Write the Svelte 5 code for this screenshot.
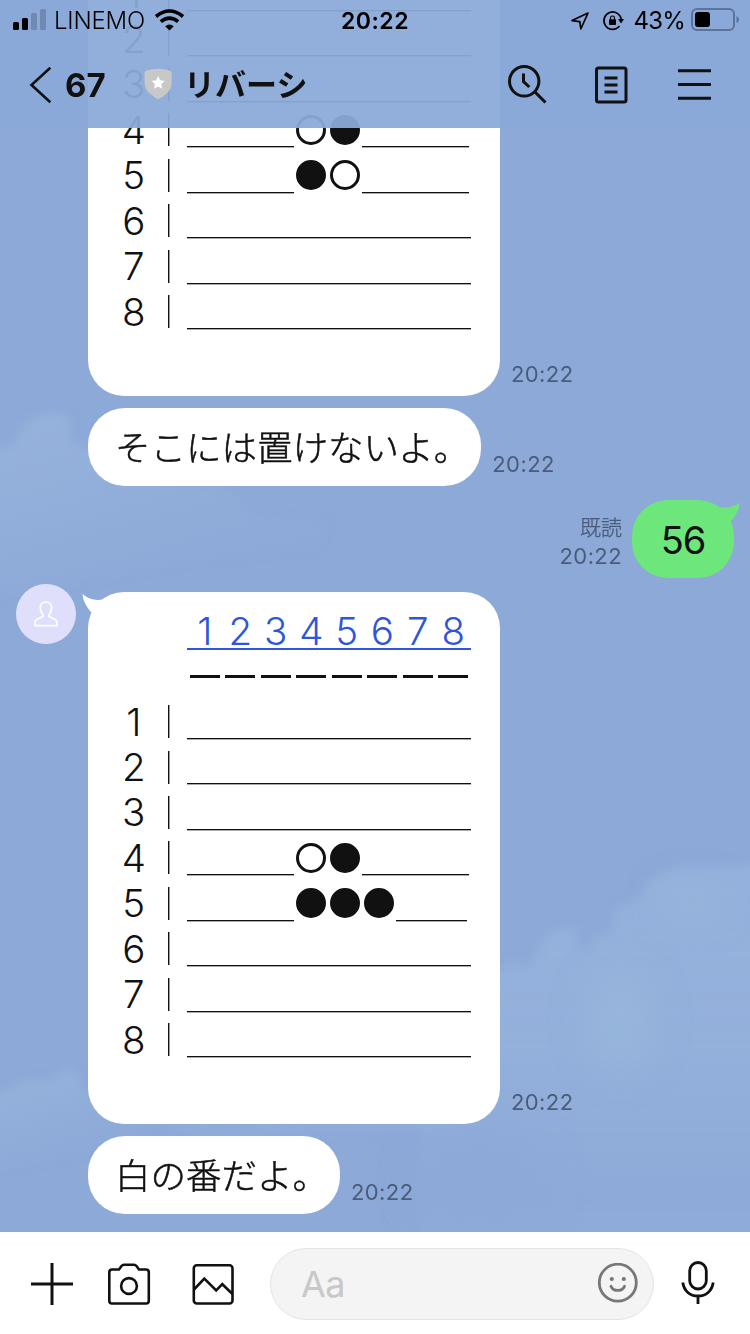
<script>
    const columns = ["1", "2", "3", "4", "5", "6", "7", "8"];

    // "_" empty square, "w" white stone, "b" black stone
    const firstBoard = [
        "________",
        "________",
        "________",
        "___wb___",
        "___bw___",
        "________",
        "________",
        "________"
    ];
    const secondBoard = [
        "________",
        "________",
        "________",
        "___wb___",
        "___bbb__",
        "________",
        "________",
        "________"
    ];

    const messages = [
        { type: "board", rows: firstBoard, time: "20:22" },
        { type: "text", text: "そこには置けないよ。", time: "20:22" },
        { type: "mine", text: "56", time: "20:22" },
        { type: "board", rows: secondBoard, time: "20:22", first: true },
        { type: "text", text: "白の番だよ。", time: "20:22" }
    ];
</script>

<div class="screen">
    <svg class="clouds" viewBox="0 0 750 1232" width="750" height="1232">
        <defs>
            <filter id="soft" x="-20%" y="-20%" width="140%" height="140%"><feGaussianBlur stdDeviation="5" /></filter>
            <filter id="softer" x="-150%" y="-150%" width="400%" height="400%"><feGaussianBlur stdDeviation="20" /></filter>
            <linearGradient id="fade" x1="0" y1="0" x2="0.5" y2="1">
                <stop offset="0" stop-color="#99b5dc" stop-opacity="0.85" />
                <stop offset="1" stop-color="#99b5dc" stop-opacity="0" />
            </linearGradient>
            <linearGradient id="fadeRight" x1="0" y1="0" x2="0" y2="1">
                <stop offset="0" stop-color="#97b3dd" stop-opacity="0.8" />
                <stop offset="0.5" stop-color="#97b3dd" stop-opacity="0.65" />
                <stop offset="0.85" stop-color="#97b3dd" stop-opacity="0.15" />
                <stop offset="1" stop-color="#97b3dd" stop-opacity="0.3" />
            </linearGradient>
        </defs>
        <g filter="url(#soft)">
            <path d="M-20 450 L12 446 L20 430 L36 416 L56 412 L70 418 L70 440 L86 446 L140 478 L230 488 L252 515 L330 522 L320 550 L200 560 L-20 600 Z" fill="url(#fade)" />
            <path d="M-20 1095 L6 1090 L26 1080 L54 1080 L64 1066 L78 1074 L84 1090 L140 1116 L140 1140 L60 1160 L-20 1170 Z" fill="url(#fade)" />
            <path d="M160 1132 L180 1120 H460 L430 1130 L220 1138 Z" fill="#97b3dd" opacity="0.35" />
            <path d="M420 1010 L512 962 L528 968 L540 944 L552 930 L574 926 L582 954 L592 938 L612 930 L616 908 L636 900 L652 878 L680 868 L770 864 L770 1250 L420 1250 Z" fill="url(#fadeRight)" />
        </g>
        <ellipse cx="620" cy="1020" rx="30" ry="50" fill="#9abadb" opacity="0.7" filter="url(#softer)" />
        <ellipse cx="690" cy="903" rx="28" ry="14" fill="#9abadb" opacity="0.8" filter="url(#softer)" />
        <ellipse cx="480" cy="1180" rx="60" ry="50" fill="#8ca9d8" filter="url(#softer)" />
    </svg>

    <div class="chat">
        {#each messages as message}
            {#if message.type === "mine"}
                <div class="row mine">
                    <div class="meta">
                        <span class="read">既読</span>
                        <span class="time">{message.time}</span>
                    </div>
                    <div class="bubble green">
                        {message.text}
                        <svg class="tail-right" viewBox="716 500 26 24" width="26" height="24">
                            <path d="M716 506.500C726 509 734 507 739.500 502.500C739.500 510 735 517 730 522L718 520Z" fill="#6de67b" />
                        </svg>
                    </div>
                </div>
            {:else}
                <div class="row {message.type}">
                    <div class="side">
                        {#if message.first}
                            <div class="avatar">
                                <svg viewBox="0 0 24 28" width="24" height="28" fill="none" stroke="#fff" stroke-width="1.7" stroke-linejoin="round">
                                    <path d="M9 15C7.300 13 6.300 10.500 6.300 7.800C6.300 4.300 8.600 2 12 2S17.700 4.300 17.700 7.800C17.700 10.500 16.700 13 15 15V16.400L21.300 19.400Q22.800 20.300 22.800 22.200V25.600H1.200V22.200Q1.200 20.300 2.700 19.400L9 16.400Z" />
                                </svg>
                            </div>
                        {/if}
                    </div>
                    {#if message.type === "board"}
                        <div class="bubble board-bubble">
                            {#if message.first}
                                <svg class="tail-left" viewBox="80 592 26 26" width="26" height="26">
                                    <path d="M82.500 594C88 599 95 601 103 599.500L104 616L91.500 612.500C86.500 607 83 601 82.500 594Z" fill="#fff" />
                                </svg>
                            {/if}
                            <div class="line">
                                <span class="cell"></span>
                                <span class="cell"></span>
                                <span class="files">
                                    {#each columns as column}<span class="cell">{column}</span>{/each}
                                </span>
                            </div>
                            <div class="line">
                                <span class="cell"></span>
                                <span class="cell"></span>
                                {#each columns as _}<span class="cell"><i class="dash"></i></span>{/each}
                            </div>
                            {#each message.rows as squares, i}
                                <div class="line">
                                    <span class="cell">{i + 1}</span>
                                    <span class="cell"><i class="bar"></i></span>
                                    {#each squares as square}
                                        {#if square === "_"}
                                            <span class="blank"></span>
                                        {:else}
                                            <span class="stone"><i class:black={square === "b"}></i></span>
                                        {/if}
                                    {/each}
                                </div>
                            {/each}
                        </div>
                    {:else}
                        <div class="bubble text-bubble">{message.text}</div>
                    {/if}
                    <span class="time">{message.time}</span>
                </div>
            {/if}
        {/each}
    </div>

    <header>
        <div class="status">
            <div class="status-left">
                <svg viewBox="12 8 34 24" width="34" height="24">
                    <rect x="13" y="22" width="6" height="8" rx="1.500" />
                    <rect x="22" y="18" width="6" height="12" rx="1.500" />
                    <rect x="31" y="13" width="6" height="17" rx="1.500" fill="#7089b1" />
                    <rect x="40" y="9" width="6" height="21" rx="1.500" fill="#7089b1" />
                </svg>
                <span class="carrier">LINEMO</span>
                <svg viewBox="154 8 32 24" width="32" height="24" fill="none" stroke="#000" stroke-width="3.600">
                    <path d="M156 16.500Q169.500 5.500 183 16.500" />
                    <path d="M160.800 21.700Q169.500 14.500 178.200 21.700" />
                    <path d="M165.200 26.300Q169.500 22.600 173.800 26.300L169.500 30.500Z" fill="#000" stroke="none" />
                </svg>
            </div>
            <span class="clock">20:22</span>
            <div class="status-right">
                <svg viewBox="569 8 24 24" width="24" height="24" fill="none" stroke="#000" stroke-width="1.700" stroke-linejoin="round">
                    <path d="M588 13L572 20.600L579.800 21.600L580.800 29Z" />
                </svg>
                <svg class="lock" viewBox="601 8 24 24" width="24" height="24">
                    <path d="M619.500 26A8.700 8.700 0 1 1 621.300 20" fill="none" stroke="#000" stroke-width="1.700" />
                    <path d="M618 19H624L621 23.500Z" />
                    <rect x="609" y="19.300" width="7" height="5.700" rx="0.800" />
                    <path d="M610.500 19.500V18Q610.500 16 612.500 16T614.500 18V19.500" fill="none" stroke="#000" stroke-width="1.200" />
                </svg>
                <span class="percent">43%</span>
                <svg viewBox="690 7 50 26" width="50" height="26">
                    <rect x="692" y="9" width="42" height="21" rx="5" fill="none" stroke="#5e739a" stroke-width="2" />
                    <rect x="695" y="12" width="15" height="15" rx="3" />
                    <path d="M736.500 16Q739 17 739 19.500T736.500 23Z" fill="#5e739a" />
                </svg>
            </div>
        </div>
        <div class="nav">
            <svg viewBox="28 66 24 38" width="24" height="38" fill="none" stroke="#111" stroke-width="2.600">
                <path d="M50.300 67.800L31.500 85L50.300 102.200" />
            </svg>
            <span class="count">67</span>
            <svg class="shield" viewBox="144 68 28 32" width="28" height="32">
                <path d="M144.600 72.500Q144.700 71 146.500 70.400Q158 67 169.700 70.400Q171.500 71 171.600 72.500V84Q171.400 92.500 158.100 99.300Q144.900 92.500 144.600 84Z" fill="#c8c8c8" />
                <path d="M158.100 76L160.100 80.300L164.700 80.900L161.300 84.100L162.200 88.800L158.100 86.500L154 88.800L154.900 84.100L151.500 80.900L156.100 80.300Z" fill="#fff" />
            </svg>
            <span class="title">リバーシ</span>
            <div class="actions">
                <svg viewBox="506 62 42 42" width="42" height="42" fill="none" stroke="#111" stroke-width="3">
                    <circle cx="524.200" cy="80.300" r="14.700" />
                    <path d="M523.500 72.500V80.500L529.300 86M534.500 90.500L545.500 101.500" />
                </svg>
                <svg viewBox="594 63 36 42" width="36" height="42" fill="none" stroke="#111" stroke-width="3">
                    <rect x="596.500" y="68" width="29.500" height="34" rx="2" />
                    <path d="M604.500 78H617.500M604.500 85H617.500M604.500 92H617.500" />
                </svg>
                <svg viewBox="676 66 36 36" width="36" height="36" fill="none" stroke="#111" stroke-width="3">
                    <path d="M678 70.800H711M678 84.500H711M678 98.300H711" />
                </svg>
            </div>
        </div>
    </header>

    <footer>
        <svg viewBox="30 1262 44 44" width="44" height="44" fill="none" stroke="#111" stroke-width="3">
            <path d="M52 1263V1305M31 1284H73" />
        </svg>
        <svg class="camera" viewBox="107 1262 44 44" width="44" height="44" fill="none" stroke="#111" stroke-width="2.600" stroke-linejoin="round">
            <path d="M112 1269.500H119L121.500 1266Q122.500 1264.800 124 1264.800H134Q135.500 1264.800 136.500 1266L139 1269.500H146Q148.800 1269.500 148.800 1272.300V1300.700Q148.800 1303.500 146 1303.500H112Q109.300 1303.500 109.300 1300.700V1272.300Q109.300 1269.500 112 1269.500Z" />
            <circle cx="129" cy="1286" r="7.900" />
        </svg>
        <svg class="picture" viewBox="191 1262 44 44" width="44" height="44" fill="none" stroke="#111" stroke-width="2.600">
            <rect x="193.800" y="1265.200" width="38.700" height="38.300" rx="3" />
            <path d="M194 1289.500L204.300 1278.500L216.200 1290.500L222.300 1284.200L232.500 1294" />
        </svg>
        <div class="input">
            <span>Aa</span>
            <svg viewBox="597 1263 42 42" width="42" height="42" fill="none" stroke="#777" stroke-width="2.800" stroke-linecap="round">
                <circle cx="617.800" cy="1282.700" r="18.500" />
                <path d="M611 1286.300C613.500 1291.800 622 1291.800 624.500 1286.300" />
                <circle cx="611.800" cy="1279" r="2.100" fill="#777" stroke="none" />
                <circle cx="623.800" cy="1279" r="2.100" fill="#777" stroke="none" />
            </svg>
        </div>
        <svg class="mic" viewBox="680 1261 36 46" width="36" height="46" fill="none" stroke="#111" stroke-width="2.800">
            <rect x="689.700" y="1262.500" width="16.600" height="26.500" rx="8.300" />
            <path d="M682.800 1282.500C684 1291 690 1296 698 1296S712 1291 713.200 1282.500M698 1296V1304" />
        </svg>
    </footer>
</div>

<style>
    :global(body) {
        margin: 0;
    }

    .screen {
        position: relative;
        display: flex;
        flex-direction: column;
        width: 750px;
        height: 1334px;
        overflow: hidden;
        background: #8ca9d8;
        color: #111;
        font-family: Inter, "Noto Sans CJK JP", sans-serif;
    }

    svg {
        display: block;
        flex-shrink: 0;
    }

    .clouds {
        position: absolute;
        top: 0;
        left: 0;
    }

    .chat {
        position: relative;
        box-sizing: border-box;
        height: 1232px;
        flex-shrink: 0;
        display: flex;
        flex-direction: column;
        justify-content: flex-end;
        gap: 12px;
        padding-bottom: 18px;
    }

    .row {
        display: flex;
        align-items: flex-end;
        flex-shrink: 0;
    }

    .row.mine {
        justify-content: flex-end;
        margin: 2px 16px 2px 0;
    }

    .side {
        width: 88px;
        align-self: flex-start;
    }

    .avatar {
        display: flex;
        align-items: center;
        justify-content: center;
        width: 60px;
        height: 60px;
        margin: -8px 0 0 16px;
        border-radius: 50%;
        background: #dfdffb;
    }

    .bubble {
        position: relative;
        box-sizing: border-box;
        background: #fff;
        border-radius: 36px;
    }

    .board-bubble {
        width: 412px;
        height: 532px;
        padding: 16px 28px;
    }

    .text-bubble {
        height: 78px;
        padding: 0 12px 0 27px;
        border-radius: 37px;
        font-family: "Noto Sans CJK JP", sans-serif;
        font-size: 35.500px;
        font-weight: 300;
        line-height: 76px;
        white-space: nowrap;
        -webkit-text-stroke: 0.5px #111;
    }

    .green {
        width: 102px;
        height: 78px;
        background: #6de67b;
        font-size: 38px;
        line-height: 80px;
        letter-spacing: -1.2px;
        text-align: center;
    }

    .tail-right {
        position: absolute;
        top: 0;
        right: -8px;
    }

    .tail-left {
        position: absolute;
        top: 0;
        left: -8px;
    }

    .line {
        display: flex;
        height: 45.450px;
        font-size: 38.500px;
        font-weight: 300;
    }

    .cell {
        display: flex;
        align-items: center;
        justify-content: center;
        width: 35.500px;
        flex-shrink: 0;
    }

    .files {
        display: flex;
        box-sizing: border-box;
        height: 42px;
        border-bottom: 2px solid #2e55dd;
        color: #2e55dd;
    }

    .files .cell {
        padding-top: 5px;
        height: 35px;
    }

    .dash {
        width: 30px;
        height: 3px;
        background: #111;
    }

    .bar {
        width: 1px;
        height: 33px;
        margin-right: 1px;
        background: #111;
        box-shadow: 1px 0 0 #999;
    }

    .blank {
        box-sizing: border-box;
        width: 35.500px;
        height: 40px;
        border-bottom: 1px solid #111;
        box-shadow: 0 1px 0 #aaa;
    }

    .stone {
        display: flex;
        align-items: center;
        justify-content: center;
        width: 34.300px;
    }

    .stone i {
        box-sizing: border-box;
        width: 30px;
        height: 30px;
        border: 3px solid #111;
        border-radius: 50%;
    }

    .stone .black {
        background: #111;
    }

    .time {
        color: #4a5c7a;
        font-size: 22px;
        line-height: 28px;
        letter-spacing: 0.4px;
    }

    .row > .time {
        margin: 0 0 8px 11px;
    }

    .meta {
        display: flex;
        flex-direction: column;
        align-items: flex-end;
        margin: 0 10px 8px 0;
    }

    .read {
        color: #4a5c7a;
        font-size: 21px;
        font-weight: 300;
        line-height: 28px;
        -webkit-text-stroke: 0.3px #4a5c7a;
    }

    header {
        position: absolute;
        top: 0;
        left: 0;
        width: 750px;
        height: 128px;
        background: rgba(139, 169, 216, 0.94);
    }

    .status {
        display: grid;
        grid-template-columns: 1fr auto 1fr;
        align-items: center;
        height: 40px;
        padding: 0 10px 0 12px;
    }

    .status-left,
    .status-right {
        display: flex;
        align-items: center;
    }

    .status-right {
        justify-content: flex-end;
    }

    .carrier {
        width: 100px;
        margin-left: 8px;
        color: #000;
        font-size: 24px;
        font-weight: 300;
        letter-spacing: -0.2px;
    }

    .clock {
        padding: 2px 2px 0 0;
        color: #000;
        font-size: 23px;
        font-weight: 600;
        letter-spacing: 0.5px;
    }

    .lock {
        margin-left: 8px;
    }

    .percent {
        margin: 1px 5px 0 9px;
        color: #000;
        font-size: 24px;
        letter-spacing: -0.8px;
    }

    .nav {
        display: flex;
        align-items: center;
        height: 88px;
        padding: 1px 38px 0 28px;
        box-sizing: border-box;
    }

    .count {
        width: 79px;
        margin-left: 13px;
        font-size: 33px;
        font-weight: 700;
    }

    .shield {
        margin-top: -2px;
    }

    .title {
        margin: -5px 0 0 12px;
        font-family: "Noto Sans CJK JP", sans-serif;
        font-size: 31px;
        font-weight: 700;
    }

    .actions {
        display: flex;
        align-items: center;
        gap: 46px;
        margin: -2px 0 0 auto;
    }

    footer {
        display: flex;
        align-items: center;
        flex-shrink: 0;
        height: 102px;
        box-sizing: border-box;
        padding: 2px 0 0 30px;
        background: #fff;
    }

    .camera {
        margin-left: 33px;
    }

    .picture {
        margin-left: 40px;
    }

    .input {
        display: flex;
        align-items: center;
        justify-content: space-between;
        box-sizing: border-box;
        width: 384px;
        height: 72px;
        margin-left: 35px;
        padding: 0 14px 0 30px;
        border: 1px solid #e4e4e4;
        border-radius: 36px;
        background: #f4f4f4;
        color: #c8c8c8;
        font-size: 36px;
        letter-spacing: -0.6px;
    }

    .mic {
        margin-left: 26px;
    }
</style>
